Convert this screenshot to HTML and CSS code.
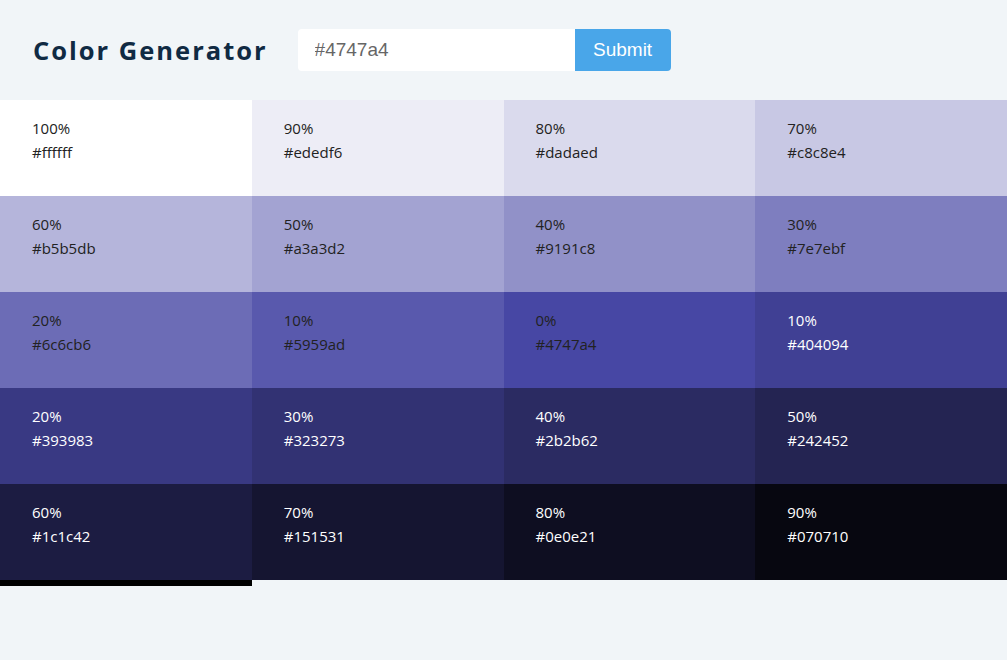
FILE: index.html
```html
<!DOCTYPE html>
<html>
<head>
<meta charset="utf-8">
<link rel="stylesheet" href="styles.css">
</head>
<body>
<section class="header">
  <h3 class="title">Color Generator</h3>
  <form class="form">
    <input class="input" type="text" value="#4747a4">
    <button class="btn" type="button">Submit</button>
  </form>
</section>
<section class="colors">
  <div class="cell" style="background:#ffffff"><p>100%</p><p>#ffffff</p></div>
  <div class="cell" style="background:#ededf6"><p>90%</p><p>#ededf6</p></div>
  <div class="cell" style="background:#dadaed"><p>80%</p><p>#dadaed</p></div>
  <div class="cell" style="background:#c8c8e4"><p>70%</p><p>#c8c8e4</p></div>
  <div class="cell" style="background:#b5b5db"><p>60%</p><p>#b5b5db</p></div>
  <div class="cell" style="background:#a3a3d2"><p>50%</p><p>#a3a3d2</p></div>
  <div class="cell" style="background:#9191c8"><p>40%</p><p>#9191c8</p></div>
  <div class="cell" style="background:#7e7ebf"><p>30%</p><p>#7e7ebf</p></div>
  <div class="cell" style="background:#6c6cb6"><p>20%</p><p>#6c6cb6</p></div>
  <div class="cell" style="background:#5959ad"><p>10%</p><p>#5959ad</p></div>
  <div class="cell" style="background:#4747a4"><p>0%</p><p>#4747a4</p></div>
  <div class="cell light" style="background:#404094"><p>10%</p><p>#404094</p></div>
  <div class="cell light" style="background:#393983"><p>20%</p><p>#393983</p></div>
  <div class="cell light" style="background:#323273"><p>30%</p><p>#323273</p></div>
  <div class="cell light" style="background:#2b2b62"><p>40%</p><p>#2b2b62</p></div>
  <div class="cell light" style="background:#242452"><p>50%</p><p>#242452</p></div>
  <div class="cell light" style="background:#1c1c42"><p>60%</p><p>#1c1c42</p></div>
  <div class="cell light" style="background:#151531"><p>70%</p><p>#151531</p></div>
  <div class="cell light" style="background:#0e0e21"><p>80%</p><p>#0e0e21</p></div>
  <div class="cell light" style="background:#070710"><p>90%</p><p>#070710</p></div>
  <div class="cell-end"></div>
</section>
</body>
</html>
```
FILE: styles.css
```css
* { box-sizing: border-box; }
html, body { margin: 0; padding: 0; }
body {
  background: #f1f5f8;
  font-family: "Open Sans", "Noto Sans", sans-serif;
  color: #222;
  width: 1007px;
  height: 660px;
  overflow: hidden;
}
.header {
  display: flex;
  align-items: center;
  height: 100px;
  padding-left: 33px;
  gap: 30px;
}
.title {
  margin: 0;
  font-family: "Open Sans", sans-serif;
  font-weight: 700;
  font-size: 25.5px;
  letter-spacing: 2px;
  color: #102a43;
}
.form {
  display: flex;
  margin: 0;
  height: 42px;
}
.input {
  width: 277px;
  height: 42px;
  border: none;
  outline: none;
  border-radius: 4px 0 0 4px;
  background: #fff;
  padding: 0 17px;
  font-family: "Liberation Sans", Arial, sans-serif;
  font-size: 19px;
  color: #666;
}
.btn {
  width: 96px;
  height: 42px;
  border: none;
  border-radius: 0 4px 4px 0;
  background: #49a6e9;
  color: #fff;
  font-family: "Liberation Sans", Arial, sans-serif;
  font-size: 19px;
  padding: 0;
}
.colors {
  display: grid;
  grid-template-columns: repeat(4, 1fr);
}
.cell {
  height: 96px;
  padding: 16px 32px;
  font-size: 15px;
  line-height: 24px;
  color: #222;
}
.cell p { margin: 0; }
.cell.light { color: #fff; }
.cell-end {
  height: 6px;
  background: #000;
}
```
